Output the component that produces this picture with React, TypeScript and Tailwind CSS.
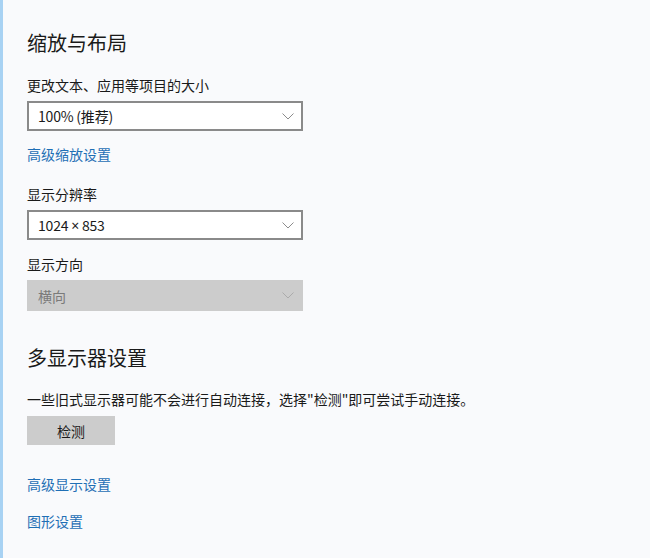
import React from "react";

const font = { fontFamily: '"Noto Sans CJK SC", "Noto Sans", sans-serif' };

function Chevron({ color }: { color: string }) {
  return (
    <svg width="12" height="7" viewBox="0 0 12 7" fill="none" className="shrink-0">
      <path d="M0.5 0.5 L6 6 L11.5 0.5" stroke={color} strokeWidth="1" />
    </svg>
  );
}

function Select({ value, disabled }: { value: React.ReactNode; disabled?: boolean }) {
  if (disabled) {
    return (
      <div className="mt-[6px] flex h-[31px] w-[276px] items-center justify-between bg-[#cccccc] pl-[11px] pr-[9px]">
        <span className="text-[14px] leading-5 text-[#7a7a7a]">{value}</span>
        <Chevron color="#ababab" />
      </div>
    );
  }
  return (
    <div className="mt-[6px] flex h-[30px] w-[276px] items-center justify-between border-2 border-[#8a8a8a] bg-white pl-[9px] pr-[7px]">
      <span className="text-[14px] leading-5 tracking-[-0.2px] text-[#1a1a1a]">{value}</span>
      <Chevron color="#8c8c8c" />
    </div>
  );
}

export default function App() {
  return (
    <div className="flex h-[558px] w-[650px] bg-[#f9fafc]" style={font}>
      <div className="w-[3px] shrink-0 bg-[#a8d2f3]" />
      <div className="flex flex-col items-start pl-[24px] pt-[29px]">
        <h1 className="text-[20px] leading-7 font-normal text-[#1a1a1a]">缩放与布局</h1>
        <p className="mt-[18px] text-[14px] leading-5 text-[#1a1a1a]">更改文本、应用等项目的大小</p>
        <Select value="100% (推荐)" />
        <a className="mt-[13px] text-[14px] leading-5 text-[#1f6fb5]">高级缩放设置</a>
        <p className="mt-[20px] text-[14px] leading-5 text-[#1a1a1a]">显示分辨率</p>
        <Select
          value={
            <>
              1024 <span style={{ fontFamily: '"Noto Sans", sans-serif' }}>×</span> 853
            </>
          }
        />
        <p className="mt-[14px] text-[14px] leading-5 text-[#1a1a1a]">显示方向</p>
        <Select value="横向" disabled />
        <h2 className="mt-[33px] text-[20px] leading-7 font-normal text-[#1a1a1a]">多显示器设置</h2>
        <p className="mt-[17px] text-[14px] leading-5 text-[#1a1a1a]">
          一些旧式显示器可能不会进行自动连接，选择"检测"即可尝试手动连接。
        </p>
        <button className="mt-[7px] flex h-[29px] w-[88px] items-center justify-center bg-[#cccccc] text-[14px] leading-5 text-[#1a1a1a]">
          检测
        </button>
        <a className="mt-[29px] text-[14px] leading-5 text-[#1f6fb5]">高级显示设置</a>
        <a className="mt-[17px] text-[14px] leading-5 text-[#1f6fb5]">图形设置</a>
      </div>
    </div>
  );
}
